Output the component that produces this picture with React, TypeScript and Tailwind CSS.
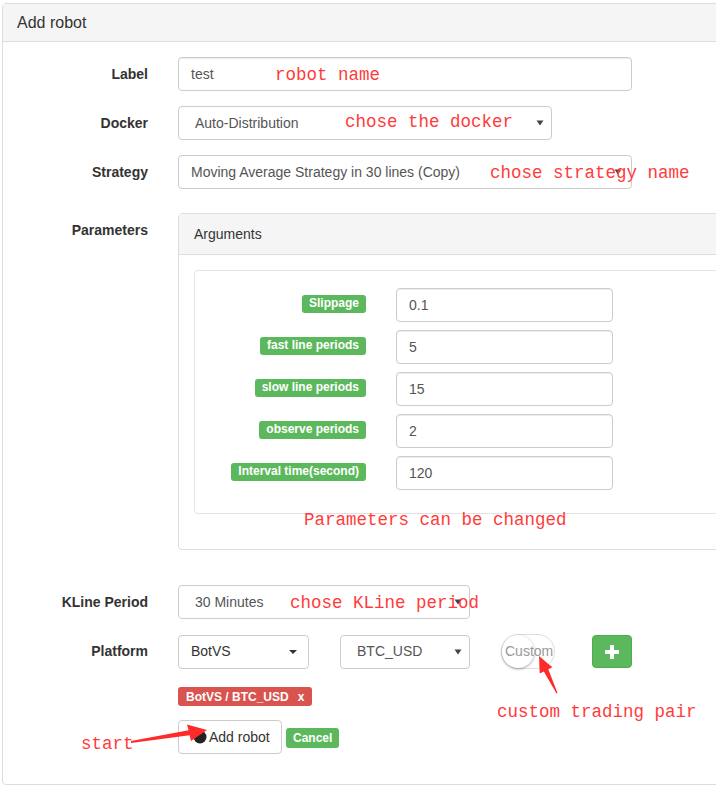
import type { ReactNode } from "react";

const arrowDown = (
  <svg width="8" height="6" viewBox="0 0 8 6" className="shrink-0">
    <polygon points="0.5,0.5 7.5,0.5 4,5.5" fill="#444" />
  </svg>
);

function FormRow({ label, children, className = "" }: { label: string; children: ReactNode; className?: string }) {
  return (
    <div className={`flex ${className}`}>
      <div className="w-[145px] shrink-0 pt-[7px] text-right text-[14px] font-bold leading-[20px] text-[#333]">
        {label}
      </div>
      <div className="ml-[30px]">{children}</div>
    </div>
  );
}

function TextBox({ value, width }: { value: string; width: string }) {
  return (
    <div
      className={`${width} flex h-[34px] items-center rounded-[4px] border border-[#ccc] bg-white px-[12px] text-[14px] text-[#555] shadow-[inset_0_1px_1px_rgba(0,0,0,0.075)]`}
    >
      {value}
    </div>
  );
}

function SelectBox({ value, width, pad = "pl-[16px]", arrowPad = "pr-[7px]" }: { value: string; width: string; pad?: string; arrowPad?: string }) {
  return (
    <div
      className={`${width} ${pad} ${arrowPad} flex h-[34px] items-center justify-between rounded-[4px] border border-[#ccc] bg-white text-[14px] text-[#555]`}
    >
      <span>{value}</span>
      {arrowDown}
    </div>
  );
}

const params = [
  { name: "Slippage", value: "0.1" },
  { name: "fast line periods", value: "5" },
  { name: "slow line periods", value: "15" },
  { name: "observe periods", value: "2" },
  { name: "Interval time(second)", value: "120" },
];

const note = "absolute whitespace-nowrap font-['Liberation_Mono','Courier_New',monospace] text-[17.5px] leading-[22px] text-[#ff3b3b]";

export default function App() {
  return (
    <div className="relative h-[808px] w-[716px] overflow-hidden bg-white font-['Liberation_Sans',Arial,sans-serif] text-[14px] text-[#333]">
      <div className="ml-[2px] mt-[3px] w-[760px] rounded-[4px] border border-[#ddd]">
        <div className="flex h-[38px] items-center border-b border-[#ddd] bg-[#f5f5f5] pl-[14px] text-[16px] text-[#333]">
          Add robot
        </div>

        <div className="pb-[30px] pt-[15px]">
          <FormRow label="Label" className="mb-[15px]">
            <TextBox value="test" width="w-[454px]" />
          </FormRow>
          <FormRow label="Docker" className="mb-[15px]">
            <SelectBox value="Auto-Distribution" width="w-[374px]" />
          </FormRow>
          <FormRow label="Strategy" className="mb-[24px]">
            <SelectBox value="Moving Average Strategy in 30 lines (Copy)" width="w-[454px]" pad="pl-[12px]" arrowPad="pr-[9px]" />
          </FormRow>

          <FormRow label="Parameters">
            <div className="w-[560px] rounded-[4px] border border-[#ddd]">
              <div className="flex h-[41px] items-center border-b border-[#ddd] bg-[#f5f5f5] pl-[15px] text-[14px] text-[#333]">
                Arguments
              </div>
              <div className="p-[15px]">
                <div className="mb-[20px] rounded-[4px] border border-[#e3e3e3] pb-[23px] pt-[17px]">
                  {params.map((p) => (
                    <div key={p.name} className="mb-[8px] flex last:mb-0">
                      <div className="flex w-[171px] shrink-0 justify-end pt-[7px]">
                        <span className="h-[18px] rounded-[3px] bg-[#5cb85c] px-[7px] pt-[2px] text-[12px] font-bold leading-[13px] text-white">
                          {p.name}
                        </span>
                      </div>
                      <div className="ml-[30px]">
                        <TextBox value={p.value} width="w-[217px]" />
                      </div>
                    </div>
                  ))}
                </div>
              </div>
            </div>
          </FormRow>

          <FormRow label="KLine Period" className="mt-[35px]">
            <SelectBox value="30 Minutes" width="w-[292px]" />
          </FormRow>

          <FormRow label="Platform" className="mt-[15px]">
            <div className="flex items-center">
              <div className="flex h-[34px] w-[131px] items-center justify-between rounded-[4px] border border-[#ccc] bg-white pl-[12px] pr-[11px] text-[14px] text-[#333]">
                <span>BotVS</span>
                <span className="h-0 w-0 border-x-[4px] border-t-[4px] border-x-transparent border-t-[#333]" />
              </div>
              <div className="ml-[31px]">
                <SelectBox value="BTC_USD" width="w-[130px]" />
              </div>
              <div className="relative ml-[31px] h-[35px] w-[54px] rounded-full border border-[#ddd] bg-white">
                <div className="absolute left-0 top-0 h-[33px] w-[32px] rounded-full bg-white shadow-[0_1px_3px_rgba(0,0,0,0.35)]" />
                <span className="absolute left-[3px] top-[6px] text-[14px] leading-[20px] text-[#999]">Custom</span>
              </div>
              <button className="ml-[37px] flex h-[33px] w-[40px] items-center justify-center rounded-[4px] border border-[#4cae4c] bg-[#5cb85c]">
                <svg width="14" height="14" viewBox="0 0 14 14">
                  <rect x="5" y="0" width="4" height="14" fill="white" />
                  <rect x="0" y="5" width="14" height="4" fill="white" />
                </svg>
              </button>
            </div>
          </FormRow>

          <div className="ml-[175px] mt-[18px] flex">
            <span className="flex h-[19px] items-center rounded-[3px] bg-[#d9534f] px-[8px] text-[12px] font-bold text-white">
              BotVS / BTC_USD<span className="ml-[9px]">x</span>
            </span>
          </div>

          <div className="ml-[175px] mt-[14px] flex items-start">
            <button className="flex h-[34px] w-[104px] items-center rounded-[4px] border border-[#ccc] bg-white pl-[14px] text-[14px] text-[#333]">
              <svg width="14" height="14" viewBox="0 0 14 14" className="mr-[2px]">
                <circle cx="7" cy="7" r="6.5" fill="#222" />
              </svg>
              Add robot
            </button>
            <span className="ml-[4px] mt-[8px] flex h-[20px] items-center rounded-[3px] bg-[#5cb85c] px-[7px] text-[12px] font-bold text-white">
              Cancel
            </span>
          </div>
        </div>
      </div>

      <span className={`${note} left-[275px] top-[64px]`}>robot name</span>
      <span className={`${note} left-[345px] top-[111px]`}>chose the docker</span>
      <span className={`${note} left-[490px] top-[162px]`}>chose strategy name</span>
      <span className={`${note} left-[304px] top-[509px]`}>Parameters can be changed</span>
      <span className={`${note} left-[290px] top-[592px]`}>chose KLine period</span>
      <span className={`${note} left-[497px] top-[701px]`}>custom trading pair</span>
      <span className={`${note} left-[81px] top-[733px]`}>start</span>

      <svg className="pointer-events-none absolute left-0 top-0" width="716" height="808">
        <polygon
          points="207,730 187,724.5 188.6,730.3 131,741 131,743 189.6,735.3 191,741"
          fill="#ff2a2a"
        />
        <polygon
          points="539,656 552.3,667.3 548.3,669.3 557.5,693 556.5,693.4 543.8,671.5 539.7,673.5"
          fill="#ff2a2a"
        />
      </svg>
    </div>
  );
}
